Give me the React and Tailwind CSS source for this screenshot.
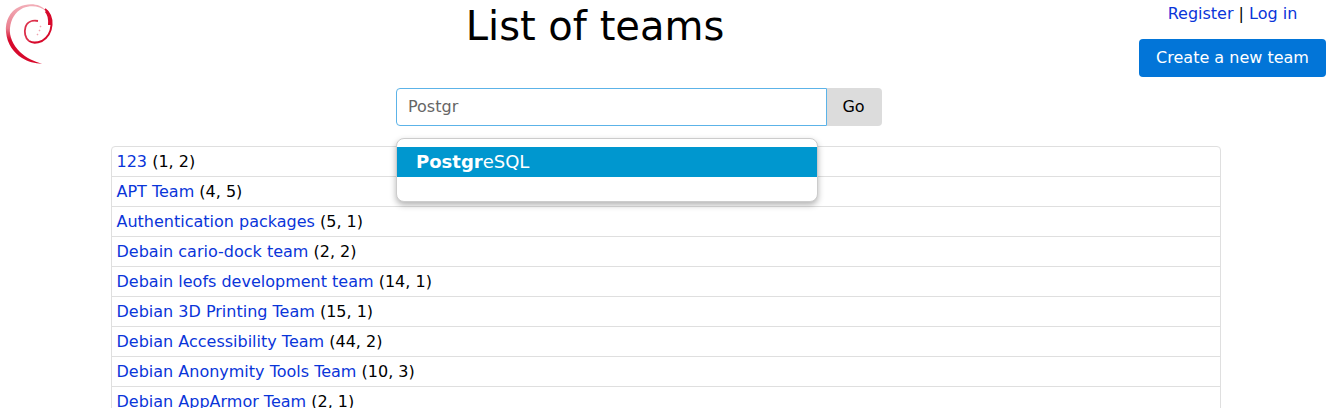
import React from "react";

const TEAMS = [
  ["123", "(1, 2)"],
  ["APT Team", "(4, 5)"],
  ["Authentication packages", "(5, 1)"],
  ["Debain cario-dock team", "(2, 2)"],
  ["Debain leofs development team", "(14, 1)"],
  ["Debian 3D Printing Team", "(15, 1)"],
  ["Debian Accessibility Team", "(44, 2)"],
  ["Debian Anonymity Tools Team", "(10, 3)"],
  ["Debian AppArmor Team", "(2, 1)"],
];

const Swirl = () => (
  <svg width="56" height="66" viewBox="0 0 56 66" fill="none">
    <defs>
      <linearGradient id="swirl" x1="0" y1="0" x2="0" y2="1">
        <stop offset="0" stopColor="#f2aeb8" />
        <stop offset="0.4" stopColor="#ea7f8f" />
        <stop offset="0.6" stopColor="#d70a2c" />
        <stop offset="1" stopColor="#d70a2c" />
      </linearGradient>
    </defs>
    {/* outer crescent, pale at the top and solid red at the bottom */}
    <path
      d="M46 11C40 3 28 3 19 7C10 11 5 21 6 32C7 44 14 53 22 58C28 62 35 63 42 64C34 61 26 58 20 52C13 45 9 36 10 28C11 19 15 12 23 8C31 5 40 6 46 11Z"
      fill="url(#swirl)"
    />
    <path d="M45 9C49 12 52 18 51.5 25C51 32 47 38 42 41C37 43 32 43 29 41" stroke="#d70a2c" strokeWidth="2" />
    <path d="M46 11C49 14 50 19 49.5 25" stroke="#d70a2c" strokeWidth="3" />
    <path d="M29 41C25 38 24 32 25.5 27C27 22 32 20 38 21" stroke="#dc2f4a" strokeWidth="1.8" />
    <path d="M40 26L41 27M39 30L40 31M37 34L38 35" stroke="#f0a3ae" strokeWidth="1.5" />
  </svg>
);

const App = () => {
  return (
    <div className="h-[408px] overflow-hidden bg-white text-base leading-6 text-black font-['DejaVu_Sans',sans-serif]">
      <header className="flex h-[88px]">
        <div className="w-[55px] shrink-0">
          <Swirl />
        </div>
        <h1 className="w-[1080px] pt-1 text-center text-[40px] leading-[44px]">List of teams</h1>
        <div className="ml-1 w-[187px] text-center">
          <p className="pt-[2px]">
            <a href="#" className="text-[#0a35d9]">Register</a> | <a href="#" className="text-[#0a35d9]">Log in</a>
          </p>
          <button className="mt-[13px] h-[38px] w-[187px] rounded bg-[#0275d8] text-white">Create a new team</button>
        </div>
      </header>

      <div className="relative">
        <form className="ml-[396px] flex h-[38px] w-[486px]">
          <input
            readOnly
            value="Postgr"
            className="w-[431px] rounded-l border border-[#5cb3e8] px-[11px] text-[#666666] outline-none"
          />
          <button type="button" className="w-[55px] rounded-r bg-[#dcdcdc] pr-[2px]">Go</button>
        </form>

        <div className="absolute left-[396px] top-[50px] z-10 h-[64px] w-[422px] rounded-lg border border-[#cccccc] bg-white pt-2 shadow-[0_3px_6px_rgba(0,0,0,0.3)]">
          <div className="h-[30px] bg-[#0097cf] pl-[19px] text-lg leading-[30px] text-white">
            <strong>Postgr</strong>eSQL
          </div>
        </div>

        <ul className="ml-[111px] mt-5 w-[1110px] rounded border border-[#dfdfdf]">
          {TEAMS.map(([name, counts]) => (
            <li key={name} className="h-[30px] border-b border-[#dfdfdf] pl-[4.5px] leading-[30px] last:border-b-0">
              <a href="#" className="text-[#0a35d9]">{name}</a> {counts}
            </li>
          ))}
        </ul>
      </div>
    </div>
  );
};

export default App;
